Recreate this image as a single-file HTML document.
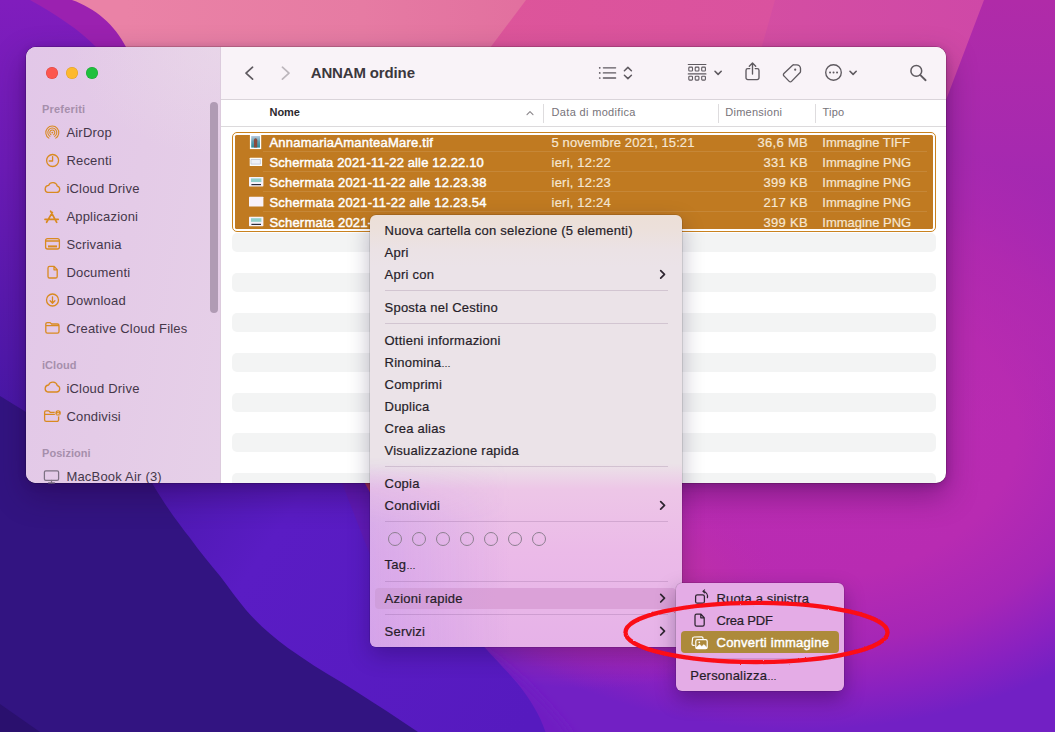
<!DOCTYPE html>
<html lang="it">
<head>
<meta charset="utf-8">
<title>ANNAM ordine</title>
<style>
*{box-sizing:border-box;margin:0;padding:0}
html,body{width:1055px;height:732px;overflow:hidden;background:#b52cad}
body{position:relative;font-family:"Liberation Sans",sans-serif;font-size:13px;color:#3d3140;-webkit-font-smoothing:antialiased}
#bg{position:absolute;left:0;top:0;width:1055px;height:732px;display:block}
#win{position:absolute;left:26px;top:47px;width:920px;height:436px;border-radius:10px;background:#fff;
 box-shadow:0 0 0 0.5px rgba(0,0,0,.28),0 12px 30px 1px rgba(40,0,60,.36),0 2px 8px rgba(40,0,60,.2);}
#winclip{position:absolute;inset:0;border-radius:10px;overflow:hidden}
#sidebar{position:absolute;left:0;top:0;width:195px;height:436px;
 background:linear-gradient(100deg,#e2c7e8 0%,#e4cbe7 50%,#e6d0e8 100%);border-right:1px solid #dccbdd}
#sidebar:before{content:"";position:absolute;inset:0;background:radial-gradient(ellipse 150px 110px at 100% 0,rgba(238,226,234,.4) 0,rgba(238,226,234,0) 100%)}
.tl{position:absolute;top:20px;width:12px;height:12px;border-radius:50%}
.sh{position:absolute;left:16px;font-size:11px;font-weight:700;letter-spacing:.05px;color:#a68fac;white-space:nowrap;line-height:14px}
.si{position:absolute;left:40.4px;font-size:13px;letter-spacing:.2px;color:#45374a;white-space:nowrap;line-height:16px}
.ic{position:absolute;overflow:visible}
#thumb{position:absolute;left:184.2px;top:55px;width:7.8px;height:211px;border-radius:4px;background:#b09bb4}
#toolbar{position:absolute;left:195px;top:0;width:725px;height:53px;background:#f9f3f8;border-bottom:1px solid #dad4da}
#title{position:absolute;left:89.7px;top:16px;font-size:15px;font-weight:700;letter-spacing:-.14px;color:#3c383d;line-height:20px;white-space:nowrap}
#colhead{position:absolute;left:195px;top:53px;width:725px;height:27px;background:#fff;border-bottom:1px solid #dcdadc}
.ch{position:absolute;top:4.5px;font-size:11px;letter-spacing:.25px;color:#77737a;line-height:14px;white-space:nowrap}
.cd{position:absolute;top:3.5px;width:1px;height:19px;background:#dedcde}
#list{position:absolute;left:195px;top:79px;width:725px;height:357px}
.stripe{position:absolute;left:11px;width:704px;height:18.5px;border-radius:5px;background:#f3f4f4}
#sel{position:absolute;left:11px;top:6px;width:704px;height:100px;border-radius:5px;background:#fff;border:1px solid #c9821f}
#self{position:absolute;left:2px;top:2px;right:2px;bottom:2px;border-radius:1.5px;background:#c07a21}
.row{position:absolute;left:0;width:702px;height:20px}
.row .n{position:absolute;left:36.4px;top:2.5px;font-weight:400;-webkit-text-stroke:.45px #fff;color:#fff;letter-spacing:.23px;line-height:16px;white-space:nowrap}
.row .d{-webkit-text-stroke:.2px #f6e6d2;position:absolute;left:318.6px;top:2.5px;color:#f6e6d2;letter-spacing:.2px;line-height:16px;white-space:nowrap}
.row .s{-webkit-text-stroke:.2px #f6e6d2;position:absolute;right:127px;top:2.5px;color:#f6e6d2;letter-spacing:.3px;line-height:16px;white-space:nowrap;text-align:right}
.row .t{-webkit-text-stroke:.2px #f6e6d2;position:absolute;left:589.3px;top:2.5px;color:#f6e6d2;line-height:16px;white-space:nowrap}
.row i{position:absolute;left:17px;top:3px;width:13px;height:13px}
.rl{position:absolute;left:30px;right:8px;height:1px;background:rgba(255,255,255,.1)}
#menu{position:absolute;left:370px;top:214.5px;width:311.5px;height:432px;border-radius:6px;
 background:linear-gradient(to bottom,#ecdfd7 0,#ece0db 3.5%,#ebe2e5 8%,#ebe3e8 12%,#ebe3e8 57.5%,#edc6e7 63.5%,#ebbae8 78%,#e6b2e8 100%);
 box-shadow:0 0 0 .5px rgba(0,0,0,.2),0 8px 22px rgba(20,0,50,.28)}
#menu:before{content:"";position:absolute;left:0;right:0;top:56%;bottom:0;border-radius:0 0 6px 6px;background:linear-gradient(to right,rgba(150,110,240,.22) 0,rgba(200,150,240,0) 45%);-webkit-mask-image:linear-gradient(to bottom,transparent 0,#000 35%);mask-image:linear-gradient(to bottom,transparent 0,#000 35%)}
.mi{position:absolute;left:14.5px;font-size:13px;letter-spacing:.24px;color:#261d28;-webkit-text-stroke:.2px #261d28;line-height:16px;white-space:nowrap}
.el{font-size:9.5px;letter-spacing:0}
.ms{position:absolute;left:14.5px;width:283px;height:1px;margin-top:-.5px;background:rgba(70,30,80,.15)}
.arr{position:absolute;left:289px;width:7px;height:11px;overflow:visible}
#hl{position:absolute;left:5px;top:373px;width:301px;height:21.5px;border-radius:4px;background:linear-gradient(to right,#cf9edc,#dba1d8 40%,#dba1d8)}
.tagc{position:absolute;top:317px;width:14px;height:14px;border-radius:50%;border:1px solid #8d7f90}
#sub{position:absolute;left:676px;top:582.5px;width:167.5px;height:108.5px;border-radius:6px;background:#e4ace6;
 box-shadow:0 0 0 .5px rgba(0,0,0,.2),0 8px 20px rgba(20,0,50,.35)}
#sub .mi{left:40.5px}
#shl{position:absolute;left:5px;top:48.5px;width:158px;height:22px;border-radius:4px;background:#ad8a3b}
#ell{position:absolute;left:0;top:0;width:1055px;height:732px;pointer-events:none}
</style>
</head>
<body>
<svg id="bg" viewBox="0 0 1055 732">
<defs>
<radialGradient id="gbase" cx="800" cy="430" r="300" gradientUnits="userSpaceOnUse" gradientTransform="translate(800 430) scale(1.45 1) translate(-800 -430)">
<stop offset="0" stop-color="#bc2cb3"/><stop offset=".5" stop-color="#b82bb2"/><stop offset=".72" stop-color="#a626b6"/><stop offset=".88" stop-color="#8a21c0"/><stop offset="1" stop-color="#7220c4"/>
</radialGradient>
<linearGradient id="gtop" x1="0" y1="0" x2="0" y2="1"><stop offset="0" stop-color="#b02ba8"/><stop offset=".45" stop-color="#b62bae" stop-opacity=".6"/><stop offset=".62" stop-color="#b82bb2" stop-opacity="0"/></linearGradient>
<linearGradient id="gpink" x1="126" y1="0" x2="985" y2="0" gradientUnits="userSpaceOnUse">
<stop offset="0" stop-color="#e981a6"/><stop offset=".42" stop-color="#e478a3"/><stop offset=".46" stop-color="#dc589c"/><stop offset=".74" stop-color="#da529e"/><stop offset=".77" stop-color="#d34ca3"/><stop offset="1" stop-color="#d049a6"/>
</linearGradient>
<linearGradient id="gpk1" x1="126" y1="0" x2="520" y2="0" gradientUnits="userSpaceOnUse"><stop offset="0" stop-color="#ea82a6"/><stop offset=".6" stop-color="#e67ba3"/><stop offset="1" stop-color="#e2709f"/></linearGradient>
<linearGradient id="gpk2" x1="490" y1="0" x2="775" y2="0" gradientUnits="userSpaceOnUse"><stop offset="0" stop-color="#dd559a"/><stop offset="1" stop-color="#da529f"/></linearGradient>
<linearGradient id="gpk3" x1="760" y1="0" x2="985" y2="0" gradientUnits="userSpaceOnUse"><stop offset="0" stop-color="#d44ea2"/><stop offset="1" stop-color="#cf48a7"/></linearGradient>
<linearGradient id="gleft" x1="0" y1="0" x2="0" y2="420" gradientUnits="userSpaceOnUse">
<stop offset="0" stop-color="#801dbd"/><stop offset=".4" stop-color="#6c1bb6"/><stop offset="1" stop-color="#4717a6"/>
</linearGradient>
<linearGradient id="gmid" x1="150" y1="480" x2="520" y2="732" gradientUnits="userSpaceOnUse">
<stop offset="0" stop-color="#4b18ad"/><stop offset=".3" stop-color="#5a1cc4"/><stop offset="1" stop-color="#561abf"/>
</linearGradient>
<radialGradient id="gglow" cx="590" cy="585" r="200" gradientUnits="userSpaceOnUse" gradientTransform="translate(590 585) scale(1 .52) translate(-590 -585)">
<stop offset="0" stop-color="#cc3c9c"/><stop offset=".4" stop-color="#c2349e" stop-opacity=".75"/><stop offset="1" stop-color="#b82bb0" stop-opacity="0"/>
</radialGradient>
<filter id="soft" x="-10%" y="-10%" width="120%" height="120%"><feGaussianBlur stdDeviation="5"/></filter>
</defs>
<rect width="1055" height="732" fill="#6c1ec2"/><rect width="1055" height="732" fill="url(#gbase)"/><rect width="1055" height="732" fill="url(#gtop)"/>
<path d="M60,0 L530,0 L440,120 L60,120 Z" fill="url(#gpk1)"/>
<path d="M526,0 L776,0 L742,120 L436,120 Z" fill="url(#gpk2)"/>
<path d="M775,0 L984,0 L946,100 L946,120 L741,120 Z" fill="url(#gpk3)"/>
<path d="M0,0 L72,0 C95,8 115,25 126,47 L160,60 L160,500 L0,500 Z" fill="#9b21b0"/>
<path d="M0,0 L30,0 C55,14 80,30 96,47 L150,60 L150,500 L0,500 Z" fill="url(#gleft)"/>
<rect width="1055" height="732" fill="url(#gglow)"/>
<path d="M470,640 C500,660 540,690 575,740 L140,740 L140,470 L470,470 Z" fill="#701ec2" filter="url(#soft)"/>
<path d="M140,470 L478,470 L478,640 C494,658 508,672 518,684 C532,702 542,718 548,740 L140,740 Z" fill="url(#gmid)"/>
<path d="M0,396 L26,412 L146,470 L152,483 C165,505 178,523 190,538 C200,552 210,564 220,576 C229,588 237,599 246,610 C258,624 272,636 288,648 C305,660 322,671 341,682 C362,695 382,708 400,720 L418,732 L0,732 Z" fill="#321481"/>
<path d="M0,704 L40,732 L0,732 Z" fill="#2a106e"/>
<path d="M340,478 L372,478 L372,560 Z" fill="#6a1aa8" opacity=".45"/>
<path d="M362,478 L372,478 L372,496 Z" fill="#c23c58"/>
</svg>

<div id="win"><div id="winclip">
<div id="sidebar">
 <div class="tl" style="left:20px;background:#fc564f;box-shadow:inset 0 0 0 .5px rgba(160,30,20,.35)"></div>
 <div class="tl" style="left:40px;background:#fdb92e;box-shadow:inset 0 0 0 .5px rgba(170,110,0,.35)"></div>
 <div class="tl" style="left:60px;background:#1fc03d;box-shadow:inset 0 0 0 .5px rgba(0,110,20,.35)"></div>
 <div class="sh" style="top:55px;letter-spacing:.2px">Preferiti</div>
 <div class="si" style="top:78px">AirDrop</div>
 <div class="si" style="top:106px">Recenti</div>
 <div class="si" style="top:134px">iCloud Drive</div>
 <div class="si" style="top:162px">Applicazioni</div>
 <div class="si" style="top:190px">Scrivania</div>
 <div class="si" style="top:218px">Documenti</div>
 <div class="si" style="top:246px">Download</div>
 <div class="si" style="top:274px">Creative Cloud Files</div>
 <div class="sh" style="top:311px">iCloud</div>
 <div class="si" style="top:334px">iCloud Drive</div>
 <div class="si" style="top:362px">Condivisi</div>
 <div class="sh" style="top:399px">Posizioni</div>
 <div class="si" style="top:422px">MacBook Air (3)</div>
 <div id="thumb"></div>
</div>
<div id="toolbar">
 <div id="title">ANNAM ordine</div>
</div>
<div id="colhead">
 <div class="ch" style="left:48.6px;font-weight:700;color:#2d2a2e;letter-spacing:-.1px">Nome</div>
 <div class="cd" style="left:322px"></div>
 <div class="ch" style="left:330.6px;letter-spacing:.33px">Data di modifica</div>
 <div class="cd" style="left:496.5px"></div>
 <div class="ch" style="left:504.3px">Dimensioni</div>
 <div class="cd" style="left:593.5px"></div>
 <div class="ch" style="left:601.5px">Tipo</div>
</div>
<div id="list">
 <div class="stripe" style="top:107px"></div>
 <div class="stripe" style="top:147px"></div>
 <div class="stripe" style="top:187px"></div>
 <div class="stripe" style="top:227px"></div>
 <div class="stripe" style="top:267px"></div>
 <div class="stripe" style="top:307px"></div>
 <div class="stripe" style="top:347px"></div>
 <div id="sel"><div id="self"></div>
  <div class="row" style="top:-1px"><span class="n">AnnamariaAmanteaMare.tif</span><span class="d" style="letter-spacing:.09px">5 novembre 2021, 15:21</span><span class="s">36,6 MB</span><span class="t">Immagine TIFF</span></div>
  <div class="row" style="top:19px"><span class="n" style="letter-spacing:.13px">Schermata 2021-11-22 alle 12.22.10</span><span class="d">ieri, 12:22</span><span class="s">331 KB</span><span class="t">Immagine PNG</span></div>
  <div class="row" style="top:39px"><span class="n" style="letter-spacing:.21px">Schermata 2021-11-22 alle 12.23.38</span><span class="d">ieri, 12:23</span><span class="s">399 KB</span><span class="t">Immagine PNG</span></div>
  <div class="row" style="top:59px"><span class="n" style="letter-spacing:.21px">Schermata 2021-11-22 alle 12.23.54</span><span class="d">ieri, 12:24</span><span class="s">217 KB</span><span class="t">Immagine PNG</span></div>
  <div class="row" style="top:79px"><span class="n" style="letter-spacing:.21px">Schermata 2021-11-22 alle 12.24.05</span><span class="d">ieri, 12:24</span><span class="s">399 KB</span><span class="t">Immagine PNG</span></div>
  <div class="rl" style="top:18px"></div><div class="rl" style="top:38px"></div><div class="rl" style="top:58px"></div><div class="rl" style="top:78px"></div>
 </div>
</div>
</div></div>

<svg id="icons" viewBox="0 0 1055 732" style="position:absolute;left:0;top:0;width:1055px;height:732px;pointer-events:none" fill="none" stroke-linecap="round" stroke-linejoin="round">
<g stroke="#d98a20" stroke-width="1.300">
 <!-- airdrop -->
 <g stroke-width="1.050"><path d="M48.860,138.100 A6.500,6.500 0 1 1 55.740,138.100"/>
 <path d="M49.920,136.400 A4.500,4.500 0 1 1 54.680,136.400"/>
 <path d="M50.980,134.700 A2.500,2.500 0 1 1 53.620,134.700"/></g>
 <circle cx="52.300" cy="132.600" r=".9" fill="#d98a20" stroke="none"/>
 <!-- recenti -->
 <circle cx="52.6" cy="160.5" r="6"/>
 <path d="M52.6,156.6 V161 H49.2"/>
 <!-- cloud -->
 <path id="cl" d="M47.6,192.4 H56.6 A3.2,3.2 0 0 0 57.3,186.1 A4.6,4.6 0 0 0 48.6,185.4 A3.6,3.6 0 0 0 47.6,192.4 Z"/>
 <path d="M47.6,392 H56.6 A3.2,3.2 0 0 0 57.3,385.7 A4.6,4.6 0 0 0 48.6,385 A3.6,3.6 0 0 0 47.6,392 Z"/>
 <!-- apps -->
 <path stroke-width="1.700" d="M50.600,211.200 L56.700,222.300 M52.400,212.400 L46.600,222.300 M45,219.300 H58.200"/>
 <!-- scrivania -->
 <rect x="45.6" y="238.6" width="13.8" height="10.4" rx="2"/>
 <path d="M45.6,241 H59.4"/>
 <path stroke-width="2" stroke-linecap="butt" d="M48,246.4 H57"/>
 <!-- documenti -->
 <path d="M49.6,266.4 H54.2 L57.2,269.6 V276.4 A1.6,1.6 0 0 1 55.6,278 H49.6 A1.6,1.6 0 0 1 48,276.4 V268 A1.6,1.6 0 0 1 49.600,266.4 Z M54,266.6 V269.8 H57"/>
 <!-- download -->
 <circle cx="52.5" cy="300" r="6"/>
 <path d="M52.5,296.8 V303 M50.1,300.8 L52.5,303.2 L54.9,300.8"/>
 <!-- folder -->
 <path d="M45.8,324 A1.4,1.4 0 0 1 47.200,322.600 H50.2 L51.6,324 H57.4 A1.6,1.6 0 0 1 59,325.600 V331.600 A1.600,1.600 0 0 1 57.400,333.200 H47.400 A1.600,1.600 0 0 1 45.800,331.600 Z M45.800,325.700 H59"/>
 <!-- condivisi -->
 <path d="M44.600,412.300 A1.400,1.400 0 0 1 46,410.900 H48.800 L50.200,412.300 H57 A1.600,1.600 0 0 1 58.600,413.900 V419.800 A1.600,1.600 0 0 1 57,421.400 H46.200 A1.600,1.600 0 0 1 44.600,419.800 Z M44.600,414.300 H58.600"/>
 <circle cx="58.100" cy="412.900" r="3.500" fill="#e4cbe7" stroke="none"/>
 <circle cx="58.100" cy="412.900" r="2.700" fill="#d98a20" stroke="none"/>
</g>
<g stroke="#f0dcee" stroke-width=".8"><path d="M58.100,411.500 v.4 M57.100,414.300 A1,1 0 0 1 59.100,414.300"/></g>
<!-- macbook -->
<g stroke="#7d7183" stroke-width="1.25">
 <rect x="44.400" y="470.900" width="14.200" height="9.400" rx="1.400"/>
 <path d="M51.500,480.300 V483 M48.500,482.800 H54.500"/>
</g>
<!-- toolbar -->
<g stroke="#5f5a60" stroke-width="1.7">
 <path d="M252.600,67.200 L246,73.200 L252.600,79.200"/>
</g>
<g stroke="#bcb6bc" stroke-width="1.7">
 <path d="M282.400,67.200 L289,73.200 L282.400,79.200"/>
</g>
<g stroke="#5f5a60" stroke-width="1.35">
 <path d="M603.400,67.800 H615.600 M603.400,72.900 H615.600 M603.400,78 H615.600"/>
 <path stroke-width="1.7" d="M599.700,67.800 h.1 M599.700,72.900 h.1 M599.700,78 h.1"/>
 <path stroke-width="1.5" d="M624.400,70.800 L627.900,67.400 L631.400,70.800 M624.400,75.200 L627.900,78.600 L631.400,75.200"/>
 <path stroke-width="1.2" d="M688.300,64.500 H705.900 M688.300,73.900 H705.900"/>
 <g stroke-width="1.100"><rect x="688.800" y="67.100" width="3.700" height="3.900" rx=".8"/><rect x="695.200" y="67.100" width="3.700" height="3.900" rx=".8"/><rect x="701.700" y="67.100" width="3.700" height="3.900" rx=".8"/>
 <rect x="688.800" y="76.200" width="3.700" height="3.900" rx=".8"/><rect x="695.200" y="76.200" width="3.700" height="3.900" rx=".8"/><rect x="701.700" y="76.200" width="3.700" height="3.900" rx=".8"/></g>
 <path stroke-width="1.6" d="M715,71.300 L718.100,74.400 L721.200,71.300"/>
 <path d="M749.800,68.600 H747.800 A1.800,1.800 0 0 0 746,70.400 V77.800 A1.800,1.800 0 0 0 747.800,79.600 H757.200 A1.800,1.800 0 0 0 759,77.800 V70.400 A1.800,1.800 0 0 0 757.200,68.600 H755.200 M752.500,63.200 V74 M749.300,66.200 L752.500,63 L755.700,66.200"/>
 <path d="M793.900,64.800 H796.800 A3.700,3.700 0 0 1 800.500,68.500 V71.400 A1.900,1.900 0 0 1 799.900,72.800 L791.500,81.400 A1.600,1.600 0 0 1 789.200,81.400 L783.900,75.900 A1.600,1.600 0 0 1 783.900,73.600 L792.600,65.300 A1.900,1.900 0 0 1 793.900,64.800 Z"/>
 <circle cx="795.200" cy="69.700" r="1.100" fill="#5f5a60" stroke="none"/>
 <circle cx="833.500" cy="72.500" r="7.800"/>
 <path stroke-width="1.900" d="M830,72.500 h.1 M833.500,72.500 h.1 M837,72.500 h.1"/>
 <path stroke-width="1.600" d="M850,71.300 L853.100,74.400 L856.200,71.300"/>
 <circle cx="916.300" cy="70.900" r="5.400" stroke-width="1.500"/>
 <path stroke-width="1.900" d="M920.400,75.100 L925.600,80.200"/>
</g>
<!-- file thumbs -->
<defs><linearGradient id="tealg" x1="0" y1="0" x2="0" y2="1"><stop offset="0" stop-color="#b9c9dc"/><stop offset=".5" stop-color="#5aa0b4"/><stop offset="1" stop-color="#2f8a96"/></linearGradient></defs>
<g stroke="none">
 <rect x="249.900" y="134.700" width="11.300" height="14.400" fill="#fff"/>
 <rect x="251.200" y="136" width="8.800" height="11.600" fill="url(#tealg)"/>
 <path d="M254,147.600 V142 C253.600,140.400 253.800,138.600 255.600,138.200 C257.400,138.600 257.600,140.400 257.200,142 V147.600 Z" fill="#8a4a3c"/>
 <rect x="249.700" y="157.700" width="12.400" height="8.300" rx=".6" fill="#fdfcf8"/>
 <rect x="251.400" y="159.500" width="9" height="4.600" fill="#eef0f6" stroke="#a9b6d0" stroke-width=".6"/>
 <rect x="249" y="177" width="14.400" height="9.400" rx=".6" fill="#f6f1fa"/>
 <rect x="251" y="178.400" width="10.400" height="3.600" fill="#8fd0cc"/>
 <rect x="251.400" y="184" width="9.600" height="1.200" fill="#2c2c3c"/>
 <rect x="249" y="196.700" width="14.400" height="9.900" rx=".6" fill="#f8f2fb"/>
 <rect x="249" y="216.800" width="14.400" height="9.400" rx=".6" fill="#f6f1fa"/>
 <rect x="251" y="218.200" width="10.400" height="3.600" fill="#8fd0cc"/>
 <rect x="251.400" y="223.800" width="9.600" height="1.200" fill="#2c2c3c"/>
</g>
<!-- header sort caret -->
<path d="M527,114.600 L530,111.600 L533,114.600" stroke="#8a868a" stroke-width="1.100"/>
</svg>

<div id="menu">
 <div id="hl"></div>
 <div class="mi" style="top:8px">Nuova cartella con selezione (5 elementi)</div>
 <div class="mi" style="top:30px">Apri</div>
 <div class="mi" style="top:52px">Apri con</div>
 <div class="ms" style="top:76px"></div>
 <div class="mi" style="top:85px">Sposta nel Cestino</div>
 <div class="ms" style="top:109px"></div>
 <div class="mi" style="top:118px">Ottieni informazioni</div>
 <div class="mi" style="top:140px">Rinomina<span class="el">…</span></div>
 <div class="mi" style="top:162px">Comprimi</div>
 <div class="mi" style="top:184px">Duplica</div>
 <div class="mi" style="top:206px">Crea alias</div>
 <div class="mi" style="top:228px">Visualizzazione rapida</div>
 <div class="ms" style="top:252px"></div>
 <div class="mi" style="top:261px">Copia</div>
 <div class="mi" style="top:283px">Condividi</div>
 <div class="ms" style="top:307px"></div>
 <div class="tagc" style="left:18px"></div><div class="tagc" style="left:42px"></div><div class="tagc" style="left:66px"></div><div class="tagc" style="left:90px"></div><div class="tagc" style="left:114px"></div><div class="tagc" style="left:138px"></div><div class="tagc" style="left:162px"></div>
 <div class="mi" style="top:342.5px">Tag<span class="el">…</span></div>
 <div class="ms" style="top:367px"></div>
 <div class="mi" style="top:376px">Azioni rapide</div>
 <div class="ms" style="top:400px"></div>
 <div class="mi" style="top:409px">Servizi</div>
</div>

<div id="sub">
 <div id="shl"></div>
 <div class="mi" style="top:8.5px;letter-spacing:.14px">Ruota a sinistra</div>
 <div class="mi" style="top:30.5px;letter-spacing:-.2px">Crea PDF</div>
 <div class="mi" style="top:52.5px;font-weight:400;color:#fff;-webkit-text-stroke:.45px #fff;letter-spacing:.25px">Converti immagine</div>
 <div class="ms" style="top:76px;width:139px"></div>
 <div class="mi" style="top:85.5px;left:14.3px;letter-spacing:.2px">Personalizza<span class="el">…</span></div>
</div>

<svg id="icons2" viewBox="0 0 1055 732" style="position:absolute;left:0;top:0;width:1055px;height:732px;pointer-events:none" fill="none" stroke-linecap="round" stroke-linejoin="round">
<g stroke="#2e2530" stroke-width="1.700">
 <path d="M660.700,270.6 L664.500,274.4 L660.700,278.2"/>
 <path d="M660.700,501.6 L664.500,505.4 L660.700,509.2"/>
 <path d="M660.700,594.4 L664.500,598.2 L660.700,602.0"/>
 <path d="M660.700,627.4 L664.500,631.2 L660.700,635.0"/>
</g>
<g stroke="#2e2530" stroke-width="1.250">
 <rect x="695.600" y="594.800" width="8.800" height="8.400" rx="1.800"/>
 <path d="M703.600,591.300 A5.400,5.400 0 0 1 707.400,597.600"/>
 <path d="M704.600,589.800 L702.900,591.300 L704.700,592.900" stroke-width="1.100"/>
 <path d="M696.600,614.200 H701 L704.200,617.600 V624.400 A1.600,1.600 0 0 1 702.600,626 H696.600 A1.600,1.600 0 0 1 695,624.400 V615.800 A1.600,1.600 0 0 1 696.600,614.200 Z M700.800,614.400 V617.800 H704"/>
</g>
<g stroke="#fff" stroke-width="1.200">
 <path d="M694.200,645.400 H693.400 A1.400,1.400 0 0 1 692,644 L692.600,638.400 A1.400,1.400 0 0 1 694,637 L701.600,636.800 A1.400,1.400 0 0 1 703,638.200 V638.600"/>
 <rect x="695.800" y="639.600" width="11.400" height="9" rx="1.600"/>
 <path d="M696.200,647.600 L699.600,644.400 L701.800,646.400 L704,644.600 L706.800,647.400 V648.200 H696.200 Z" fill="#fff" stroke-width=".6"/>
 <circle cx="699.300" cy="642.300" r=".9" fill="#fff" stroke="none"/>
</g>
</svg>

<svg id="ell" viewBox="0 0 1055 732">
 <defs><filter id="rough" x="-5%" y="-20%" width="110%" height="140%"><feTurbulence type="fractalNoise" baseFrequency=".35" numOctaves="2" seed="4" result="n"/><feDisplacementMap in="SourceGraphic" in2="n" scale="1.800" xChannelSelector="R" yChannelSelector="G"/></filter></defs>
 <ellipse cx="756.500" cy="632.400" rx="131" ry="29.600" fill="none" stroke="#fb0a18" stroke-width="4.300" filter="url(#rough)"/>
</svg>
</body>
</html>
